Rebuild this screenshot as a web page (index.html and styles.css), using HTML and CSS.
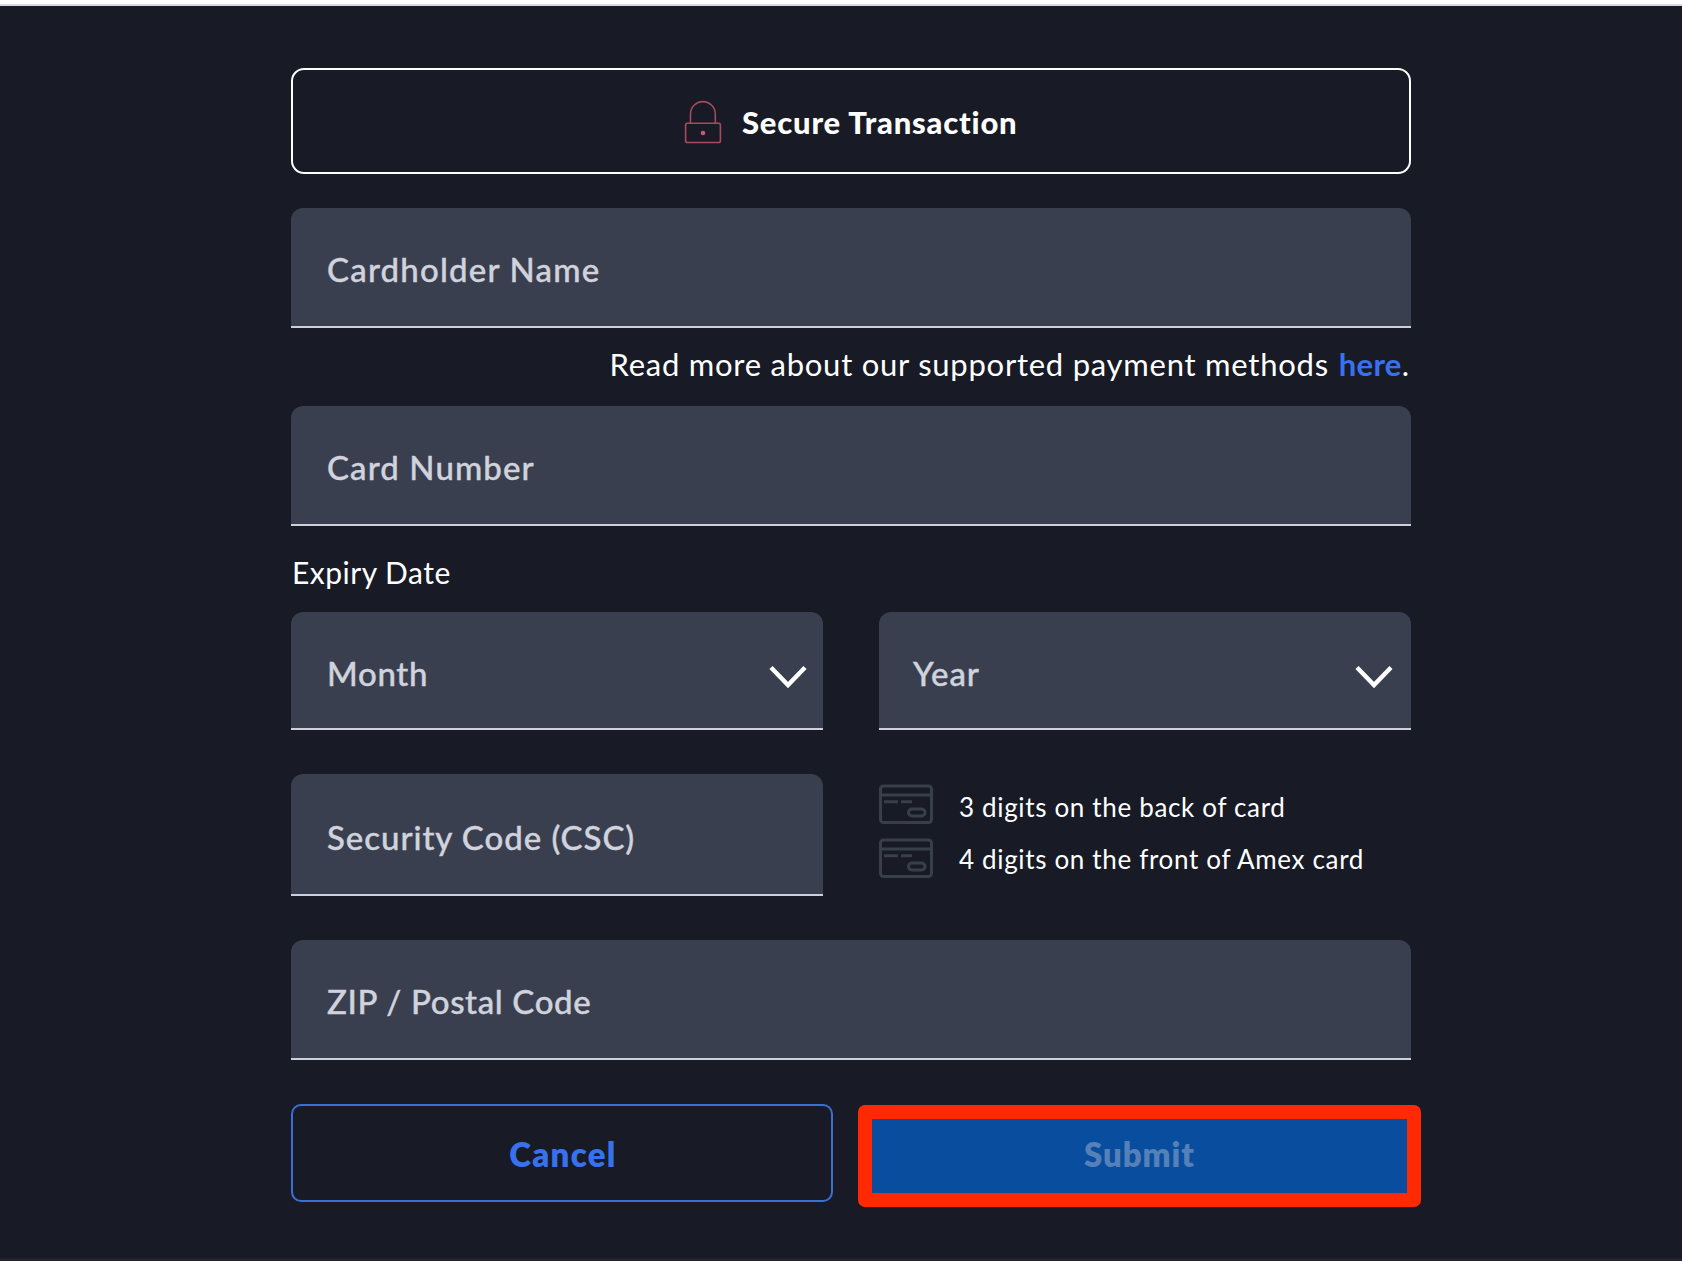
FILE: index.html
```html
<!DOCTYPE html>
<html lang="en">
<head>
<meta charset="utf-8">
<title>Secure Transaction</title>
<link rel="stylesheet" href="styles.css">
</head>
<body>
<main class="page">
  <form class="form">
    <div class="secure">
      <svg class="lock" width="38" height="44" viewBox="0 0 38 44" fill="none" stroke="#a84a5e" stroke-width="1.6">
        <path d="M6.5 23V14a12.4 12.4 0 0 1 24.8 0v9"/>
        <rect x="1.6" y="23.3" width="34.8" height="19.2" rx="1.8"/>
        <circle cx="19" cy="33" r="2.3" fill="#c85a70" stroke="none"/>
      </svg>
      <span class="secure-text">Secure Transaction</span>
    </div>
    <div class="field"><span class="t-name">Cardholder Name</span></div>
    <p class="note"><span class="t-note">Read more about our supported payment methods</span> <a class="link">here</a>.</p>
    <div class="field"><span class="t-number">Card Number</span></div>
    <div class="expiry">Expiry Date</div>
    <div class="row">
      <div class="field select"><span class="t-month">Month</span>
        <svg class="chevron" width="38" height="24" viewBox="0 0 38 24" fill="none" stroke="#fff" stroke-width="4.4"><path d="M2 2.5 19 20 36 2.5"/></svg>
      </div>
      <div class="field select year"><span class="t-year">Year</span>
        <svg class="chevron" width="38" height="24" viewBox="0 0 38 24" fill="none" stroke="#fff" stroke-width="4.4"><path d="M2 2.5 19 20 36 2.5"/></svg>
      </div>
    </div>
    <div class="row security">
      <div class="field csc"><span class="t-csc">Security Code (CSC)</span></div>
      <div class="hints">
        <div class="hint">
          <svg class="card" width="54" height="40" viewBox="0 0 54 40" fill="none" stroke="#393e4b" stroke-width="3"><rect x="1.5" y="2" width="51" height="36.5" rx="3"/><path d="M1 11H53M5 17.8H19M22 17.8H33"/><rect x="29.5" y="25" width="16.5" height="7" rx="3.5"/></svg>
          <span class="t-back">3 digits on the back of card</span>
        </div>
        <div class="hint">
          <svg class="card" width="54" height="40" viewBox="0 0 54 40" fill="none" stroke="#393e4b" stroke-width="3"><rect x="1.5" y="2" width="51" height="36.5" rx="3"/><path d="M1 11H53M5 17.8H19M22 17.8H33"/><rect x="29.5" y="25" width="16.5" height="7" rx="3.5"/></svg>
          <span class="t-front">4 digits on the front of Amex card</span>
        </div>
      </div>
    </div>
    <div class="field zip"><span class="t-zip">ZIP / Postal Code</span></div>
    <div class="actions">
      <div class="cancel"><span class="t-cancel">Cancel</span></div>
      <div class="submit"><span class="t-submit">Submit</span></div>
    </div>
  </form>
</main>
</body>
</html>
```
FILE: styles.css
```css
* { box-sizing: border-box; }
body { margin: 0; background: #181b25; font-family: Lato, "Open Sans", sans-serif; font-variant-ligatures: none; color: #fff; }
.page { height: 1261px; border-top: 4px solid #fff; border-bottom: 3px solid #22232f; overflow: hidden; }
.page::before { content: ""; display: block; height: 2px; background: #d5d9e0; }
.form { width: 1120px; margin: 62px 0 0 291px; }
.secure { display: flex; height: 106px; padding: 32px 0 0 391px; border: 2px solid #fff; border-radius: 13px; }
.lock { display: block; margin-top: -2px; }
.secure-text { margin: 2px 0 0 20px; font-size: 31px; line-height: 36px; font-weight: 900; letter-spacing: .8px; white-space: nowrap; }
.secure + .field { margin-top: 34px; }
.field { height: 120px; padding: 41px 36px 0; background: #3a3f50; border-bottom: 2px solid #cdd0da; border-radius: 12px 12px 0 0; color: #d0d3dc; font-size: 33px; line-height: 40px; font-weight: 500; white-space: nowrap; -webkit-text-stroke: .4px #d0d3dc; }
.t-name { letter-spacing: 1.2px; }
.t-number { letter-spacing: 1.1px; }
.t-month { letter-spacing: .7px; }
.t-year { letter-spacing: .9px; }
.t-csc { letter-spacing: .95px; }
.t-zip { letter-spacing: .65px; }
.note { height: 78px; margin: 0; padding: 19px 2px 0 0; font-size: 31px; line-height: 35px; text-align: right; white-space: nowrap; }
.t-note { letter-spacing: .75px; }
.link { margin-left: 2px; color: #3871ee; font-weight: 700; letter-spacing: .3px; }
.expiry { height: 86px; padding: 29px 0 0 1px; font-size: 30px; line-height: 35px; letter-spacing: .5px; }
.row { display: grid; grid-template-columns: 532px 532px; column-gap: 56px; }
.select { display: flex; justify-content: space-between; height: 118px; padding-right: 16px; }
.year { padding-left: 34px; padding-right: 18px; }
.chevron { display: block; margin-top: 12px; }
.security { margin-top: 44px; }
.csc { height: 122px; padding-top: 43px; }
.hints { display: grid; align-content: start; row-gap: 14px; padding-top: 10px; }
.hint { display: flex; gap: 26px; height: 40px; font-size: 26px; line-height: 32px; white-space: nowrap; }
.hint span { margin-top: 7px; letter-spacing: .66px; }
.hint + .hint span { margin-top: 5px; }
.zip { margin-top: 44px; }
.actions { display: flex; align-items: flex-start; margin-top: 44px; font-size: 33px; line-height: 40px; font-weight: 800; text-align: center; }
.cancel { flex: none; width: 542px; height: 98px; padding: 28px 0 0 2px; border: 2px solid #3b6fd6; border-radius: 10px; color: #3871ee; }
.t-cancel { letter-spacing: 1.3px; }
.submit { flex: none; width: 563px; height: 102px; margin: 1px 0 0 25px; padding-top: 15px; border: 14px solid #ff2a04; border-radius: 7px; background: #094d9e; color: #5580b8; }
.t-submit { letter-spacing: .9px; }
```
